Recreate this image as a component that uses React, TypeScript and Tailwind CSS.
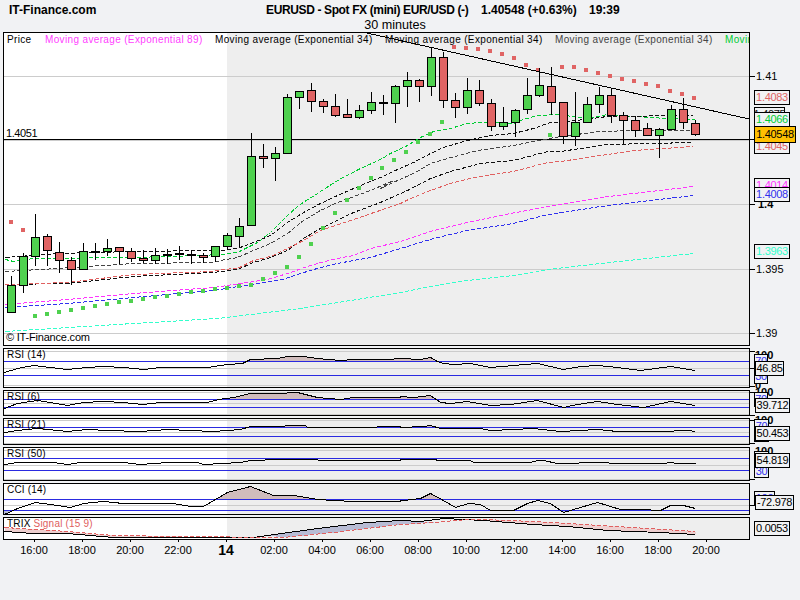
import React from "react";

type P = number[][];
const zA = (a: P): P => a.map(([x, y]) => [380 + x / 3, 100 + y / 3]);
const zB = (a: P): P => a.map(([x, y]) => [220 + x / 3, 180 + y / 3]);
const z2 = (a: P): P => a.map(([x, y]) => [400 + x / 3, y / 3]);
const z3 = (a: P): P => a.map(([x, y]) => [x / 3, 170 + y / 3]);
const z4 = (a: P): P => a.map(([x, y]) => [400 + x / 3, 170 + y / 3]);
const z5 = (a: P): P => a.map(([x, y]) => [x / 3, 340 + y / 3]);
const z6 = (a: P): P => a.map(([x, y]) => [400 + x / 3, 340 + y / 3]);
const pts = (a: P) => a.map(([x, y]) => `${Math.round(x) + 0.5},${Math.round(y) + 0.5}`).join(" ");

// [high, top of body, bottom of body, low, green?]
const candles: [number, number, number, number, number][] = [
  [276, 285, 312, 312, 1], [253, 256, 285, 292, 1], [214, 237, 256, 265, 1], [234, 236, 250, 265, 0],
  [242, 252, 260, 272, 0], [257, 260, 269, 284, 0], [243, 251, 269, 269, 1], [243, 251, 252, 259, 1],
  [239, 248, 251, 255, 1], [247, 247, 251, 263, 0], [248, 251, 258, 261, 0], [250, 258, 260, 262, 0],
  [248, 255, 260, 263, 1], [249, 254, 255, 263, 1], [246, 253, 254, 259, 1], [250, 254, 255, 263, 1],
  [253, 255, 257, 262, 0], [246, 246, 256, 261, 1], [233, 235, 246, 249, 1], [218, 226, 236, 246, 1],
  [133, 156, 225, 225, 1], [144, 156, 158, 167, 0], [147, 153, 158, 180, 1], [94, 97, 153, 153, 1],
  [91, 91, 97, 108, 1], [83, 90, 101, 111, 0], [99, 101, 106, 112, 0], [94, 106, 115, 116, 0],
  [99, 114, 117, 117, 0], [105, 110, 117, 118, 1], [92, 102, 110, 113, 1], [95, 102, 103, 114, 1],
  [85, 86, 103, 122, 1], [72, 80, 86, 106, 1], [79, 80, 86, 101, 0], [47, 57, 86, 95, 1],
  [52, 57, 100, 107, 0], [93, 100, 107, 117, 0], [78, 90, 107, 113, 1], [80, 90, 103, 105, 0],
  [99, 103, 126, 130, 0], [107, 122, 126, 129, 1], [109, 110, 122, 136, 1], [78, 95, 109, 113, 1],
  [68, 85, 95, 96, 1], [67, 86, 102, 114, 0], [102, 102, 136, 143, 0], [92, 122, 136, 145, 1],
  [97, 104, 122, 122, 1], [87, 95, 104, 112, 1], [88, 95, 115, 122, 0], [112, 115, 120, 143, 0],
  [116, 120, 130, 136, 0], [123, 128, 135, 135, 0], [128, 129, 135, 157, 1], [105, 109, 129, 129, 1],
  [98, 109, 122, 128, 0], [120, 123, 134, 135, 0],
];

const greenDots: P = [
  ...z3([[105,438],[141,432],[177,426],[213,420],[249,414],[285,408],[321,402],[357,396],[393,393],[429,387],[465,381],[501,378],[537,372],[573,366],[609,363],[645,357],[681,354],[717,348],[753,345],[789,327],[825,309],[861,291],[897,261],[933,222],[969,174],[1005,129],[1041,90],[1077,54],[1113,24]]),
  [382,168],[394,160],[406,152],[418,142],[430,134],[442,122],[550,135],
];
const redDots: P = [[11,222],[23,230],[454,47],[466,48],[478,49],[490,51],[502,54],[514,58],[526,65],[538,70],[562,67],[574,67],[586,70],[598,73],[610,76],[622,79],[634,81],[646,84],[658,86],[670,91],[682,94],[694,98]];

const mas: { c: string; p: P }[] = [
  { c: "#00cc33", p: [
    ...z3([[15,267],[40,272],[100,265],[200,263],[300,260],[400,260],[500,258],[600,256]]),
    ...zB([[0,223],[50,215],[75,205],[110,185],[150,155],[200,105],[235,75],[290,40],[350,0]]),
    [358,169],
    ...zA([[0,178],[30,158],[80,135],[120,112],[160,92],[210,85],[260,70],[300,65],[340,67],[400,68],[430,58],[470,45],[530,43]]),
    ...z2([[560,355],[620,343],[700,347],[800,353],[885,357]]),
  ]},
  { c: "#111111", p: [
    ...z3([[15,262],[170,250],[400,243],[640,240]]),
    ...zB([[0,210],[50,205],[100,185],[150,165],[200,125],[250,95],[300,70],[350,45],[440,5]]),
    ...zA([[0,230],[50,208],[100,185],[150,160],[190,140],[260,120],[330,105],[400,100],[460,85],[510,67],[540,67]]),
    ...z2([[620,347],[880,345]]),
  ]},
  { c: "#444444", p: [
    ...z3([[15,303],[170,295],[400,280],[640,275]]),
    ...zB([[0,240],[50,232],[100,210],[150,190],[200,160],[250,120],[300,90],[350,65],[450,30],[520,0]]),
    ...zA([[0,265],[50,240],[100,220],[150,188],[200,175],[290,150],[400,135],[460,122],[540,107]]),
    ...z2([[600,392],[700,390],[880,390]]),
  ]},
  { c: "#111111", p: [
    ...z3([[15,343],[200,338],[400,318],[640,305]]),
    ...zB([[0,272],[50,266],[100,245],[150,230],[200,210],[250,175],[300,145],[400,95],[480,65]]),
    ...zA([[80,270],[150,235],[210,212],[300,190],[400,180],[500,152],[540,152]]),
    ...z2([[620,432],[880,427]]),
  ]},
  { c: "#e06060", p: [
    ...z3([[15,343],[200,335],[400,312],[640,303]]),
    ...zB([[0,268],[50,265],[100,240],[150,228],[200,205],[250,180],[300,150],[400,118],[540,70]]),
    ...zA([[90,295],[150,270],[210,250],[280,232],[400,212],[500,185],[540,183]]),
    ...z2([[620,462],[700,450],[880,438]]),
  ]},
  { c: "#ff33ff", p: [
    ...z3([[15,402],[200,388],[400,370],[640,352]]),
    ...zB([[140,297],[200,280],[260,258],[300,245],[350,235],[400,225],[450,205],[540,183]]),
    ...z4([[100,180],[200,155],[330,130],[430,110],[600,82],[700,68],[880,48]]),
  ]},
  { c: "#3030ee", p: [
    ...z3([[15,410],[200,398],[400,380],[640,360]]),
    ...zB([[185,297],[240,280],[300,262],[350,250],[400,240],[450,230],[540,205]]),
    ...z4([[100,205],[200,180],[340,160],[430,135],[600,108],[700,95],[880,75]]),
  ]},
  { c: "#33ffcc", p: [
    ...z3([[15,484],[300,465],[650,443],[900,415],[1200,367]]),
    ...z4([[90,347],[200,330],[340,315],[440,298],[600,278],[880,250]]),
  ]},
];

function MainSvg() {
  const grid = [76, 140, 204, 269, 333];
  return (
    <svg className="absolute inset-0" width={745} height={312} viewBox="4 33 745 312" shapeRendering="crispEdges">
      {grid.map((y) => (
        <line key={y} x1={4} x2={749} y1={y + 0.5} y2={y + 0.5} stroke="#cccccc" />
      ))}
      <line x1={4} x2={749} y1={139.5} y2={139.5} stroke="#000000" />
      {mas.map((m, i) => (
        <polyline key={i} points={pts(m.p)} fill="none" stroke={m.c} strokeDasharray="4 2" />
      ))}
      {greenDots.map(([x, y], i) => (
        <rect key={i} x={Math.round(x) - 2} y={Math.round(y) - 2} width={4} height={4} fill="#4fd14f" />
      ))}
      {redDots.map(([x, y], i) => (
        <rect key={i} x={x - 2} y={y - 2} width={4} height={4} fill="#e06464" />
      ))}
      {candles.map(([hi, t, b, lo, g], i) => {
        const x = 11.5 + i * 12;
        return (
          <g key={i}>
            <line x1={x} x2={x} y1={hi} y2={lo + 1} stroke="#000" />
            <rect x={x - 4} y={t + 0.5} width={8} height={Math.max(b - t, 1)} fill={g ? "#4fd14f" : "#e06464"} stroke="#000" />
          </g>
        );
      })}
      <line x1={367} y1={33} x2={749} y2={119} stroke="#000" />
    </svg>
  );
}

function IndSvg({ top, h, blue, gray, curve, id }: { top: number; h: number; blue: number[]; gray: number[]; curve: P; id: string }) {
  const first = curve[0][0];
  const last = curve[curve.length - 1][0];
  const poly = (y: number) => `${first},${y} ${pts(curve)} ${last},${y}`;
  return (
    <svg className="absolute inset-0" width={745} height={h - 2} viewBox={`4 ${top + 1} 745 ${h - 2}`} shapeRendering="crispEdges">
      <defs>
        <clipPath id={`${id}a`}><rect x={4} y={top} width={745} height={blue[0] - top} /></clipPath>
        <clipPath id={`${id}b`}><rect x={4} y={blue[1]} width={745} height={h} /></clipPath>
      </defs>
      {gray.map((y) => (
        <line key={y} x1={4} x2={749} y1={y + 0.5} y2={y + 0.5} stroke="#cccccc" />
      ))}
      <polygon points={poly(blue[0])} fill="#d0bcbc" clipPath={`url(#${id}a)`} />
      <polygon points={poly(blue[1])} fill="#b8bcd4" clipPath={`url(#${id}b)`} />
      {blue.map((y) => (
        <line key={y} x1={4} x2={749} y1={y + 0.5} y2={y + 0.5} stroke="#2a2ae0" />
      ))}
      <polyline points={pts(curve)} fill="none" stroke="#000" />
    </svg>
  );
}

const rsi14 = [...z5([[12,97],[50,85],[100,76],[150,82],[200,86],[260,82],[310,79],[370,82],[430,86],[480,82],[620,82],[680,72],[725,68],[750,56],[830,55],[860,49],[910,49],[950,55],[1020,61],[1060,58],[1160,58],[1199,55]]), ...z6([[0,55],[60,58],[90,52],[110,62],[130,70],[160,73],[210,70],[270,82],[340,75],[410,70],[490,86],[540,79],[590,76],[650,82],[720,89],[810,79],[885,89]])];
const rsi6 = [...z5([[12,205],[50,190],[110,180],[150,186],[200,194],[250,187],[310,184],[370,187],[425,193],[480,187],[590,187],[620,187],[655,176],[700,172],[750,160],[830,160],[890,157],[950,170],[1020,176],[1060,172],[1199,172]]), ...z6([[0,168],[40,172],[90,166],[120,185],[150,190],[200,184],[270,196],[330,193],[410,180],[490,200],[530,192],[590,184],[650,192],[730,200],[810,184],[885,196]])];
const rsi21 = [...z5([[12,276],[50,270],[110,265],[200,273],[260,268],[320,270],[420,274],[500,268],[640,272],[720,266],[750,259],[840,259],[870,256],[915,256],[920,260],[1060,260],[1199,257]]), ...z6([[0,260],[70,259],[90,256],[120,264],[240,264],[270,270],[340,267],[400,264],[480,274],[590,268],[650,274],[780,274],[860,271],[885,274]])];
const rsi50 = [...z5([[12,372],[50,367],[160,367],[200,371],[240,367],[370,367],[420,371],[500,367],[590,367],[610,371],[720,367],[750,360],[840,357],[950,357],[955,360],[1199,360]]), ...z6([[0,357],[105,357],[110,361],[210,361],[220,365],[390,365],[410,361],[430,361],[470,368],[600,365],[650,368],[790,368],[810,365],[830,368],[885,368]])];
const cci = [...z5([[12,522],[50,505],[105,487],[150,493],[210,502],[250,490],[310,484],[370,490],[520,490],[570,499],[610,499],[680,456],[750,437],[820,466],[880,466],[950,478],[1000,481],[1060,484],[1199,484]]), ...z6([[0,481],[10,481],[60,475],[90,460],[130,480],[165,502],[205,490],[240,493],[270,511],[340,511],[380,488],[410,481],[450,490],[490,517],[590,487],[660,508],[720,508],[780,511],[810,496],[850,496],[885,505]])];
const trixB = [...z5([[12,572],[100,578],[200,580],[340,590],[540,590],[760,590],[800,585],[950,565],[1100,545],[1199,540]]), ...z6([[0,540],[60,543],[130,535],[250,540],[400,552],[500,558],[620,570],[780,576],[885,582]])];
const trixR = [...z5([[12,560],[200,572],[340,584],[540,588],[850,590],[1000,575],[1199,552]]), ...z6([[0,552],[100,545],[200,538],[250,538],[400,542],[600,556],[885,572]])];

function TrixSvg() {
  const sect = (lo: number, hi: number) => {
    const r = trixR.filter(([x]) => x >= lo && x <= hi);
    const b = trixB.filter(([x]) => x >= lo && x <= hi).reverse();
    return pts([...r, ...b]);
  };
  return (
    <svg className="absolute inset-0" width={745} height={21} viewBox="4 518 745 21" shapeRendering="crispEdges">
      <polygon points={sect(0, 190)} fill="#eecfcf" />
      <polygon points={sect(260, 440)} fill="#b8bcd4" />
      <polygon points={sect(480, 700)} fill="#eecfcf" />
      <polyline points={pts(trixB)} fill="none" stroke="#000" />
      <polyline points={pts(trixR)} fill="none" stroke="#e06060" strokeDasharray="4 2" />
    </svg>
  );
}

function Plot({ children, cls }: { children: React.ReactNode; cls: string }) {
  return (
    <div className={`relative w-[747px] shrink-0 border border-black flex ${cls}`}>
      <div className="w-[223px] bg-white" />
      <div className="flex-1 bg-[#eeeeee]" />
      {children}
    </div>
  );
}

const box = "absolute left-[4px] border border-black flex items-center justify-center text-[11px] tracking-[-0.3px] leading-none bg-[#f1f2f4]";
const tick = "absolute left-0 w-[5px] h-px bg-black";
const axisText = "absolute left-[6px] text-[11px] leading-[15px] text-black";
const ind = "absolute left-[3px] top-[-1px] text-[10px] leading-[14px] tracking-[0.2px] text-black";
const hundred = "absolute left-[5px] text-[11px] font-bold leading-[12px]";

const hours = ["16:00", "18:00", "20:00", "22:00", "14", "02:00", "04:00", "06:00", "08:00", "10:00", "12:00", "14:00", "16:00", "18:00", "20:00"];

export default function App() {
  return (
    <div className="w-[800px] h-[600px] overflow-hidden bg-[#f1f2f4] text-black font-['Liberation_Sans',sans-serif]">
      <div className="h-[32px]">
        <div className="flex items-center h-[19px] text-[12px] font-bold whitespace-nowrap">
          <span className="w-[266px] pl-[9px]">IT-Finance.com</span>
          <span className="w-[215px] tracking-[-0.37px]">EURUSD - Spot FX (mini) EUR/USD (-)</span>
          <span className="w-[108px]">1.40548 (+0.63%)</span>
          <span>19:39</span>
        </div>
        <div className="w-[790px] text-center text-[12.6px] leading-[13px]">30 minutes</div>
      </div>

      <div className="flex flex-col gap-[2px] pl-[3px]">
        {/* price */}
        <div className="flex h-[314px]">
          <Plot cls="h-[314px]">
            <MainSvg />
            <div className="absolute left-0 top-0 w-[745px] flex overflow-hidden pl-[3px] text-[10px] leading-[13px] tracking-[0.35px] whitespace-nowrap">
              <span className="w-[38px] shrink-0">Price</span>
              <span className="w-[170px] shrink-0 text-[#ff40ff]">Moving average (Exponential 89)</span>
              <span className="w-[170px] shrink-0">Moving average (Exponential 34)</span>
              <span className="w-[170px] shrink-0">Moving average (Exponential 34)</span>
              <span className="w-[170px] shrink-0 text-[#444444]">Moving average (Exponential 34)</span>
              <span className="w-[170px] shrink-0 text-[#00cc33]">Moving average (Exponential 34)</span>
            </div>
            <span className="absolute left-[2px] top-[94px] text-[11px] leading-[12px] tracking-[-0.4px]">1.4051</span>
            <span className="absolute left-[2px] top-[298px] text-[11px] leading-[13px] tracking-[-0.2px]">© IT-Finance.com</span>
          </Plot>
          <div className="relative flex-1">
            <span className={`${tick} top-[44px]`} />
            <span className={`${tick} top-[107px]`} />
            <span className={`${tick} top-[172px]`} />
            <span className={`${tick} top-[237px]`} />
            <span className={`${tick} top-[301px]`} />
            <span className={`${axisText} top-[37px]`}>1.41</span>
            <span className={`${axisText} left-[8px] top-[165px] font-bold`}>1.4</span>
            <span className={`${axisText} top-[230px]`}>1.395</span>
            <span className={`${axisText} top-[294px]`}>1.39</span>
            <span className={`${box} top-[58px] w-[36px] h-[15px] text-[#e06464]`}>1.4083</span>
            <span className={`${box} top-[75px] w-[31px] h-[15px] text-[#111111]`}>1.4075</span>
            <span className={`${box} top-[80px] w-[36px] h-[15px] text-[#00cc33]`}>1.4066</span>
            <span className={`${box} top-[107px] w-[36px] h-[15px] text-[#e06464]`}>1.4045</span>
            <span className={`${box} top-[94px] w-[42px] h-[17px] bg-[#ffc000] text-black`}>1.40548</span>
            <span className={`${box} top-[146px] w-[36px] h-[15px] text-[#ff33ff]`}>1.4014</span>
            <span className={`${box} top-[155px] w-[36px] h-[15px] text-[#3030ee]`}>1.4008</span>
            <span className={`${box} top-[212px] w-[36px] h-[15px] text-[#33ffcc]`}>1.3963</span>
          </div>
        </div>

        {/* RSI 14 */}
        <div className="flex h-[40px]">
          <Plot cls="h-[40px]">
            <IndSvg id="r14" top={348} h={40} blue={[361, 375]} gray={[351, 368, 385]} curve={rsi14} />
            <span className={ind}>RSI (14)</span>
          </Plot>
          <div className="relative flex-1">
            <span className={`${tick} top-[3px]`} />
            <span className={`${tick} top-[20px]`} />
            <span className={`${tick} top-[38px]`} />
            <span className={`${hundred} top-[1px]`}>100</span>
            <span className={`${hundred} top-[31px]`}>0</span>
            <span className={`${box} top-[6px] w-[14px] h-[15px] text-[#3030ee]`}>70</span>
            <span className={`${box} top-[21px] w-[14px] h-[15px] text-[#3030ee]`}>30</span>
            <span className={`${box} left-[5px] top-[13px] w-[29px] h-[15px] text-black`}>46.85</span>
          </div>
        </div>

        {/* RSI 6 */}
        <div className="flex h-[26px]">
          <Plot cls="h-[26px]">
            <IndSvg id="r6" top={390} h={26} blue={[399, 407]} gray={[392, 403, 414]} curve={rsi6} />
            <span className={ind}>RSI (6)</span>
          </Plot>
          <div className="relative flex-1">
            <span className={`${tick} top-[2px]`} />
            <span className={`${tick} top-[25px]`} />
            <span className={`${hundred} top-[-4px]`}>100</span>
            <span className={`${box} top-[2px] w-[14px] h-[15px] text-[#3030ee]`}>70</span>
            <span className={`${box} left-[5px] top-[8px] w-[35px] h-[15px] text-black`}>39.712</span>
          </div>
        </div>

        {/* RSI 21 */}
        <div className="flex h-[27px]">
          <Plot cls="h-[27px]">
            <IndSvg id="r21" top={418} h={27} blue={[427, 436]} gray={[420, 432, 443]} curve={rsi21} />
            <span className={ind}>RSI (21)</span>
          </Plot>
          <div className="relative flex-1">
            <span className={`${tick} top-[2px]`} />
            <span className={`${tick} top-[25px]`} />
            <span className={`${hundred} top-[-4px]`}>100</span>
            <span className={`${box} top-[1px] w-[15px] h-[15px] text-[#3030ee]`}>70</span>
            <span className={`${box} top-[9px] w-[15px] h-[15px] text-[#3030ee]`}>30</span>
            <span className={`${box} left-[5px] top-[8px] w-[35px] h-[15px] text-black`}>50.453</span>
          </div>
        </div>

        {/* RSI 50 */}
        <div className="flex h-[34px]">
          <Plot cls="h-[34px]">
            <IndSvg id="r50" top={447} h={34} blue={[458, 470]} gray={[450, 465, 479]} curve={rsi50} />
            <span className={ind}>RSI (50)</span>
          </Plot>
          <div className="relative flex-1">
            <span className={`${tick} top-[32px]`} />
            <span className={`${hundred} top-[-2px]`}>100</span>
            <span className={`${box} top-[4px] w-[15px] h-[15px] text-[#3030ee]`}>70</span>
            <span className={`${box} top-[17px] w-[15px] h-[14px] text-[#3030ee]`}>30</span>
            <span className={`${box} left-[5px] top-[6px] w-[35px] h-[15px] text-black`}>54.819</span>
          </div>
        </div>

        {/* CCI */}
        <div className="flex h-[32px]">
          <Plot cls="h-[32px]">
            <IndSvg id="cci" top={483} h={32} blue={[499, 510]} gray={[505]} curve={cci} />
            <span className={ind}>CCI (14)</span>
          </Plot>
          <div className="relative flex-1">
            <span className={`${tick} top-[22px]`} />
            <span className={`${box} top-[8px] w-[21px] h-[15px] text-[#3030ee]`}>100</span>
            <span className={`${box} left-[5px] top-[12px] w-[39px] h-[15px] text-black`}>-72.978</span>
          </div>
        </div>

        {/* TRIX */}
        <div className="flex h-[23px]">
          <Plot cls="h-[23px]">
            <TrixSvg />
            <span className={ind}>
              TRIX <span className="text-[#e06060]">Signal (15 9)</span>
            </span>
          </Plot>
          <div className="relative flex-1">
            <span className={`${box} top-[4px] w-[36px] h-[15px] text-black`}>0.0053</span>
          </div>
        </div>
      </div>

      <div className="flex pl-[10px]">
        {hours.map((t, i) => (
          <div key={i} className="flex flex-col items-center w-[48px]">
            <span className="w-px h-[2px] bg-black" />
            <span className={t === "14" ? "text-[14px] font-bold leading-[17px]" : "text-[11px] leading-[17px]"}>{t}</span>
          </div>
        ))}
      </div>
    </div>
  );
}
